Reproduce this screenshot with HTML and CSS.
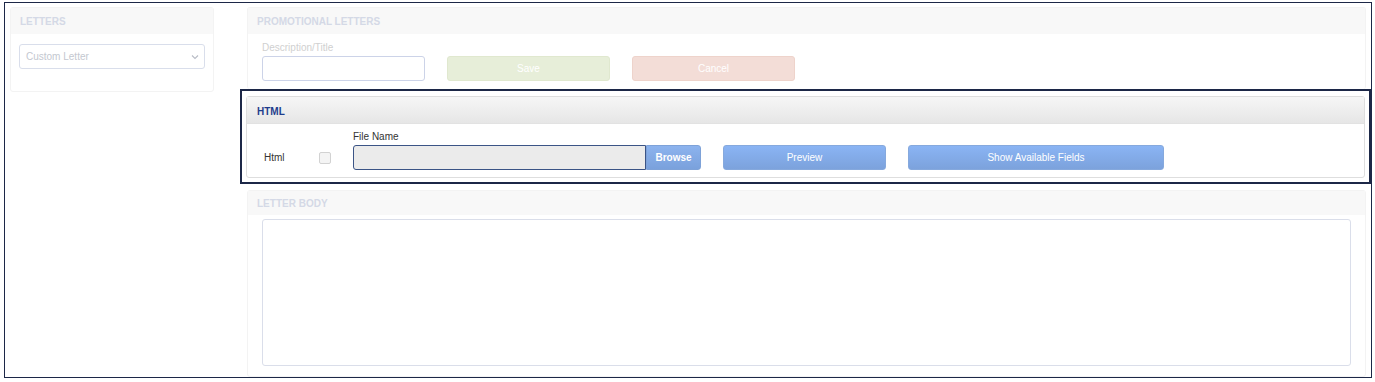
FILE: index.html
```html
<!DOCTYPE html>
<html>
<head>
<meta charset="utf-8">
<link rel="stylesheet" href="styles.css">
</head>
<body>
<div class="frame">
  <div class="left-col">
    <div class="panel letters">
      <div class="panel-head faded">LETTERS</div>
      <div class="panel-body">
        <div class="select">
          <span>Custom Letter</span>
          <svg width="8" height="6" viewBox="0 0 8 6"><path d="M1 1.5 L4 4.5 L7 1.5" fill="none" stroke="#b8bcc6" stroke-width="1.1"/></svg>
        </div>
      </div>
    </div>
  </div>
  <div class="right-col">
    <div class="panel promo">
      <div class="panel-head faded">PROMOTIONAL LETTERS</div>
      <div class="promo-body">
        <div class="field">
          <label class="lbl-faded">Description/Title</label>
          <div class="text-input"></div>
        </div>
        <div class="btn btn-save">Save</div>
        <div class="btn btn-cancel">Cancel</div>
      </div>
    </div>
    <div class="highlight">
      <div class="html-panel">
        <div class="html-head">HTML</div>
        <div class="html-body">
          <span class="html-label">Html</span>
          <span class="checkbox"></span>
          <div class="file-field">
            <label class="file-label">File Name</label>
            <div class="file-row">
              <div class="file-input"></div>
              <div class="browse">Browse</div>
            </div>
          </div>
          <div class="bbtn preview">Preview</div>
          <div class="bbtn fields">Show Available Fields</div>
        </div>
      </div>
    </div>
    <div class="panel body-panel">
      <div class="panel-head faded">LETTER BODY</div>
      <div class="body-content">
        <div class="textarea"></div>
      </div>
    </div>
  </div>
</div>
</body>
</html>
```
FILE: styles.css
```css
* { box-sizing: border-box; }
html, body { margin: 0; padding: 0; background: #fff; }
body {
  font-family: "Liberation Sans", Arial, sans-serif;
  font-size: 10px;
  width: 1375px;
  height: 382px;
  overflow: hidden;
}
.frame {
  margin: 2px 0 0 4px;
  width: 1368px;
  height: 376px;
  border: 1px solid #1c2747;
  display: flex;
  padding: 4px 0 0 5px;
  gap: 33px;
}
.left-col { width: 204px; flex: none; }
.right-col {
  width: 1119px;
  flex: none;
  display: flex;
  flex-direction: column;
}
.panel {
  border: 1px solid #f3f3f3;
  border-radius: 3px;
  background: #fff;
}
.panel-head {
  height: 26px;
  background: #f8f8f8;
  padding: 8px 9px 0;
  font-weight: bold;
  font-size: 10px;
  color: #d4d9e6;
}
.letters { height: 85px; }
.letters .panel-body { padding: 10px 8px; }
.select {
  height: 25px;
  border: 1px solid #d9deeb;
  border-radius: 3px;
  display: flex;
  align-items: center;
  justify-content: space-between;
  padding: 0 5px 0 6px;
  color: #c4c8d0;
  font-size: 10px;
}
.promo { height: 82px; border-bottom: none; }
.promo-body {
  display: flex;
  align-items: flex-end;
  padding: 8px 14px 0;
  gap: 22px;
}
.field { display: flex; flex-direction: column; }
.lbl-faded { color: #d0d0d0; font-size: 10px; margin-bottom: 3px; }
.text-input {
  width: 163px;
  height: 25px;
  border: 1px solid #ccd3e8;
  border-radius: 3px;
}
.btn {
  width: 163px;
  height: 25px;
  border-radius: 3px;
  color: #fff;
  display: flex;
  align-items: center;
  justify-content: center;
  font-size: 10px;
}
.btn-save { background: #e7eed9; border: 1px solid #e0e8cf; }
.btn-cancel { background: #f3ddd7; border: 1px solid #eed3cb; }
.highlight {
  margin: 0 -5px 0 -7px;
  height: 95px;
  border: 2px solid #1c2747;
  padding: 5px 4px 5px 4px;
  background: #fff;
  position: relative;
}
.html-panel {
  border: 1px solid #dedede;
  border-radius: 3px;
  height: 82px;
}
.html-head {
  height: 27px;
  background: linear-gradient(#f6f6f6, #e6e6e6);
  border-bottom: 1px solid #e2e2e2;
  color: #1f3d8c;
  font-weight: bold;
  font-size: 10px;
  padding: 9px 10px 0;
}
.html-body {
  display: flex;
  align-items: flex-end;
  padding: 0 0 0 17px;
  height: 52px;
  padding-bottom: 6px;
}
.html-label { color: #333; font-size: 10px; margin-bottom: 7px; width: 55px; }
.checkbox {
  width: 12px;
  height: 12px;
  border: 1px solid #d2d2d2;
  border-radius: 2px;
  background: #f4f4f4;
  margin-bottom: 6px;
  margin-right: 22px;
}
.file-field { display: flex; flex-direction: column; }
.file-label { color: #333; font-size: 10px; margin-bottom: 3px; }
.file-row { display: flex; }
.file-input {
  width: 293px;
  height: 25px;
  background: #ebebeb;
  border: 1px solid #3b5486;
  border-radius: 3px 0 0 3px;
}
.browse {
  width: 55px;
  height: 25px;
  background: linear-gradient(#8cb3ee, #7aa1dc);
  border: 1px solid #7ea2d8;
  border-radius: 0 3px 3px 0;
  color: #fff;
  font-weight: bold;
  display: flex;
  align-items: center;
  justify-content: center;
  font-size: 10px;
}
.bbtn {
  height: 25px;
  background: linear-gradient(#8ab4f4, #7ca2dc);
  border: 1px solid #86a9dd;
  border-radius: 3px;
  color: #fff;
  display: flex;
  align-items: center;
  justify-content: center;
  font-size: 10px;
}
.preview { width: 163px; margin-left: 22px; }
.fields { width: 256px; margin-left: 22px; }
.body-panel { margin-top: 6px; height: 188px; }
.body-panel .panel-head { height: 24px; padding-top: 7px; }
.body-content { padding: 4px 14px 0; }
.textarea {
  height: 147px;
  border: 1px solid #dadeea;
  border-radius: 3px;
}
```
